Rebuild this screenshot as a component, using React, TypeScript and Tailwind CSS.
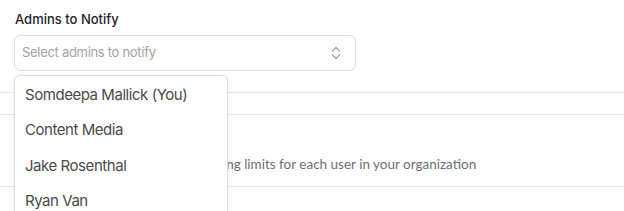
import React from "react";

function ChevronsUpDown() {
  return (
    <svg width="12" height="16" viewBox="0 0 12 16" fill="none" stroke="#9ca3af" strokeWidth="1.3" strokeLinecap="round" strokeLinejoin="round">
      <path d="M2.5 6 L6 2.5 L9.5 6" />
      <path d="M2.5 10 L6 13.5 L9.5 10" />
    </svg>
  );
}

export default function App() {
  const admins = ["Somdeepa Mallick (You)", "Content Media", "Jake Rosenthal", "Ryan Van"];
  return (
    <div className="relative h-[211px] w-full overflow-hidden bg-white" style={{ fontFamily: "Inter, 'Noto Sans', sans-serif" }}>
      <div className="border-b border-[#e8e8e8] px-[14px] pt-[10px] pb-[21px]">
        <div className="pl-[1px] text-[13px] font-medium leading-[18px] text-[#1f2329]">Admins to Notify</div>
        <div className="relative mt-[7px] w-[342px]">
          <div className="flex h-[36px] items-center justify-between rounded-[6px] border border-[#dcdcdc] bg-white pl-[7px] pr-[13px]">
            <span className="text-[13px] tracking-[-0.3px] text-[#a3a3a3]">Select admins to notify</span>
            <ChevronsUpDown />
          </div>
          <div className="absolute left-0 top-[40px] z-10 w-[214px] rounded-[6px] border border-[#dedede] bg-white pt-[1px] shadow-[0_2px_6px_rgba(0,0,0,0.08)]">
            {admins.map((a) => (
              <div key={a} className="flex h-[35.5px] items-center px-[10px] text-[15px] tracking-[-0.45px] text-[#4a4a4a]">
                {a}
              </div>
            ))}
          </div>
        </div>
      </div>
      <div className="h-[22px] border-b border-[#e8e8e8]" />
      <div className="h-[72px] border-b border-[#e8e8e8] px-[15px] pt-[16px]">
        <div className="text-[14px] font-medium leading-[20px] text-[#1f2329]">Spending Limits</div>
        <div className="mt-[4px] text-[13.5px] leading-[18px] text-[#6b6f76]" style={{ fontFamily: "Lato, 'Noto Sans', sans-serif" }}>
          Set and manage the monthly spending limits for each user in your organization
        </div>
      </div>
    </div>
  );
}
